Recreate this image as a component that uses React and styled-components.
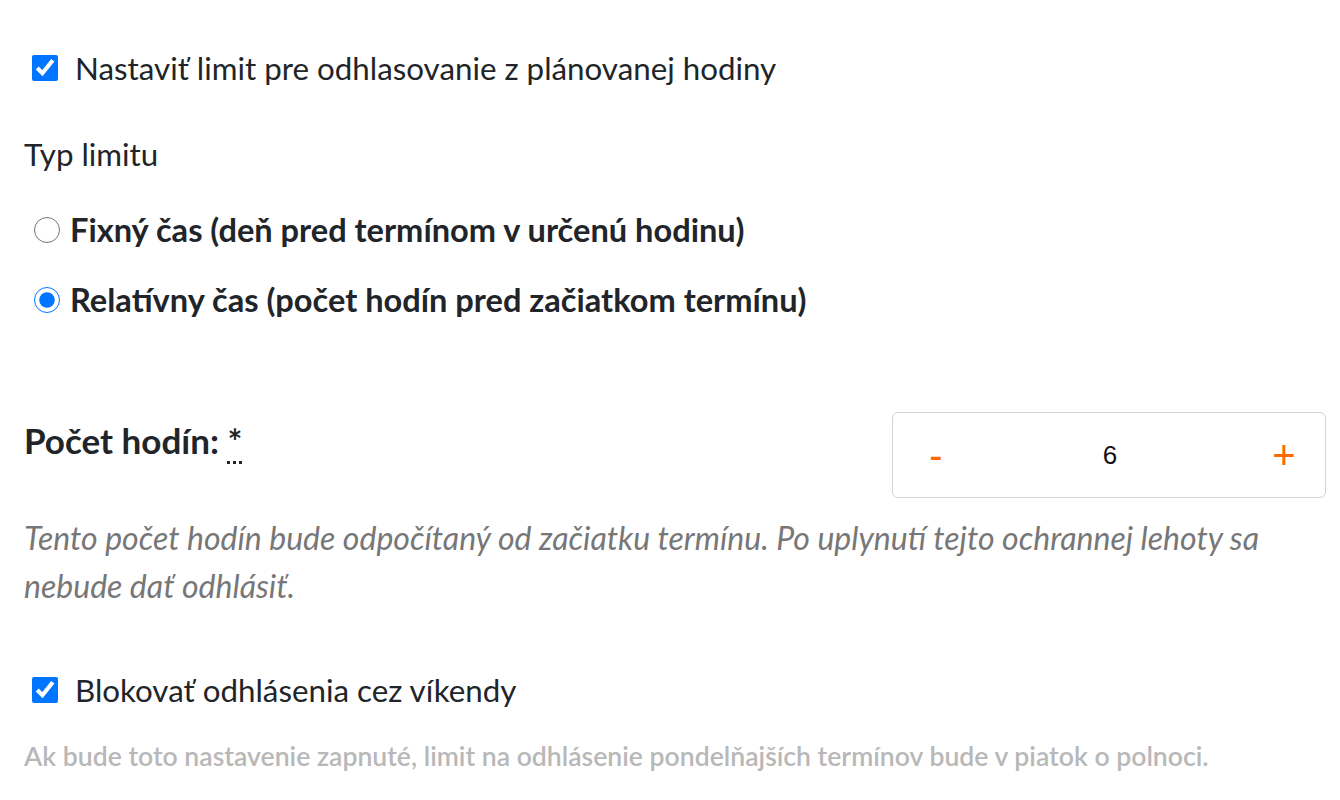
import React, { useState } from "react";
import styled, { createGlobalStyle } from "styled-components";

const Global = createGlobalStyle`
  html, body { margin: 0; padding: 0; background: #fff; }
  body { font-family: Lato, "Noto Sans", sans-serif; color: #212529; }
`;

const Page = styled.div`
  width: 1340px;
  height: 800px;
  box-sizing: border-box;
  padding: 44px 14px 0 24px;
  display: flex;
  flex-direction: column;
  overflow: hidden;
`;

const CheckRow = styled.label`
  display: flex;
  align-items: center;
  gap: 17px;
  padding-left: 8px;
  font-size: 31.3px;
  line-height: 48px;
  color: #212529;
  margin-top: ${(p) => p.$mt || 0}px;
  margin-bottom: ${(p) => p.$mb || 0}px;
`;

const Check = styled.input.attrs({ type: "checkbox" })`
  width: 26px;
  height: 26px;
  margin: 0;
  accent-color: #0075ff;
  flex: none;
`;

const Label = styled.div`
  font-size: 31.3px;
  line-height: 48px;
  margin-bottom: 28px;
`;

const RadioRow = styled.label`
  display: flex;
  align-items: center;
  gap: 10px;
  padding-left: 10px;
  font-size: 32.6px;
  font-weight: 700;
  line-height: 48px;
  margin-bottom: 22px;
`;

const Radio = styled.input.attrs({ type: "radio" })`
  width: 26px;
  height: 26px;
  margin: 0;
  accent-color: #0075ff;
  flex: none;
`;

const FieldRow = styled.div`
  display: flex;
  justify-content: space-between;
  align-items: center;
  margin-top: 66px;
`;

const FieldLabel = styled.div`
  font-size: 35px;
  font-weight: 700;
  margin-top: -30px;
`;

const Req = styled.abbr`
  text-decoration: none;
  border-bottom: 3px dotted #212529;
  cursor: help;
`;

const Stepper = styled.div`
  width: 434px;
  height: 86px;
  box-sizing: border-box;
  border: 1px solid #d4d4d4;
  border-radius: 6px;
  display: flex;
  align-items: center;
  justify-content: space-between;
  padding: 0 28px 0 30px;
  font-family: "Liberation Sans", Arial, sans-serif;
`;

const StepBtn = styled.button`
  background: none;
  border: none;
  color: #ff6a00;
  font-size: 40px;
  font-family: "Liberation Sans", Arial, sans-serif;
  padding: 0;
  width: 26px;
  cursor: pointer;
`;

const Value = styled.span`
  font-size: 26px;
  color: #111;
`;

const Help = styled.p`
  margin: 16px 0 0;
  font-size: 32px;
  line-height: 48px;
  font-style: italic;
  color: #777;
`;

const Note = styled.p`
  margin: 26px 0 0;
  font-size: 26.6px;
  font-weight: 600;
  color: #b8b8b8;
  padding-left: 0;
`;

export default function App() {
  const [val, setVal] = useState(6);
  const [mode, setMode] = useState("rel");
  return (
    <>
      <Global />
      <Page>
        <CheckRow $mb={38}>
          <Check defaultChecked />
          Nastaviť limit pre odhlasovanie z plánovanej hodiny
        </CheckRow>
        <Label>Typ limitu</Label>
        <RadioRow>
          <Radio name="t" checked={mode === "fix"} onChange={() => setMode("fix")} />
          Fixný čas (deň pred termínom v určenú hodinu)
        </RadioRow>
        <RadioRow>
          <Radio name="t" checked={mode === "rel"} onChange={() => setMode("rel")} />
          Relatívny čas (počet hodín pred začiatkom termínu)
        </RadioRow>
        <FieldRow>
          <FieldLabel>
            Počet hodín: <Req title="povinné">*</Req>
          </FieldLabel>
          <Stepper>
            <StepBtn onClick={() => setVal((v) => Math.max(0, v - 1))}>-</StepBtn>
            <Value>{val}</Value>
            <StepBtn onClick={() => setVal((v) => v + 1)}>+</StepBtn>
          </Stepper>
        </FieldRow>
        <Help>
          Tento počet hodín bude odpočítaný od začiatku termínu. Po uplynutí tejto ochrannej lehoty sa
          <br />
          nebude dať odhlásiť.
        </Help>
        <CheckRow $mt={56}>
          <Check defaultChecked />
          Blokovať odhlásenia cez víkendy
        </CheckRow>
        <Note>
          Ak bude toto nastavenie zapnuté, limit na odhlásenie pondelňajších termínov bude v piatok o polnoci.
        </Note>
      </Page>
    </>
  );
}
